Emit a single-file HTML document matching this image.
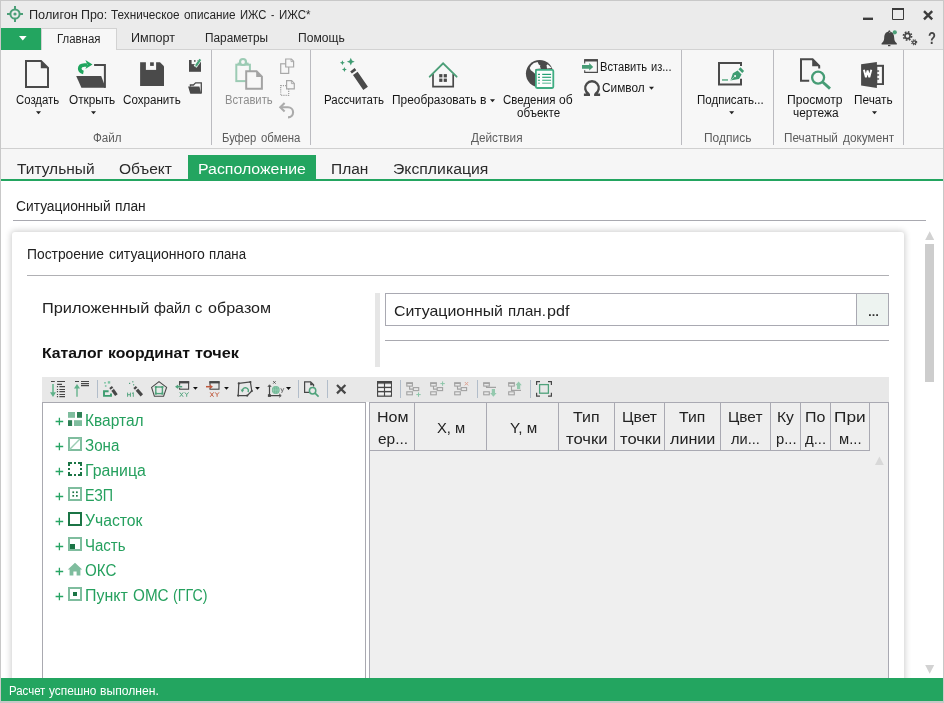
<!DOCTYPE html>
<html lang="ru">
<head>
<meta charset="utf-8">
<title>Полигон Про: Техническое описание ИЖС - ИЖС*</title>
<style>
*{box-sizing:border-box;margin:0;padding:0}
html,body{width:944px;height:703px;overflow:hidden;background:#fff}
body{font-family:"Liberation Sans",sans-serif;color:#1f1f1f;position:relative}
.a{position:absolute}
.t{position:absolute;white-space:nowrap;line-height:1;transform-origin:0 0}
#tx{position:absolute;left:0;top:0;width:944px;height:703px;will-change:transform}
svg{position:absolute;overflow:visible}
#win{left:0;top:0;width:944px;height:703px;background:#c8c8c8}
#inner{left:1px;top:1px;width:942px;height:700px;background:#fff}
#title{left:1px;top:1px;width:942px;height:49px;background:#ebebeb}
#tabline{left:117px;top:49px;width:826px;height:1px;background:#d2d2d2}
#appbtn{left:1px;top:28px;width:40px;height:22px;background:#23a560}
#tabact{left:41px;top:28px;width:76px;height:22px;background:#f7f7f7;border:1px solid #d2d2d2;border-bottom:none}
#ribbon{left:1px;top:50px;width:942px;height:98px;background:#f7f7f7}
#ribline{left:1px;top:148px;width:942px;height:1px;background:#d0d0d0}
.sep{position:absolute;top:50px;width:1px;height:95px;background:#bbbbc0}
#doctabs{left:1px;top:149px;width:942px;height:30px;background:#f6f6f6}
#dtact{left:188px;top:155px;width:128px;height:25px;background:#23a560}
#greenline{left:1px;top:179px;width:942px;height:2px;background:#23a560}
#hline1{left:13px;top:220px;width:913px;height:1px;background:#a9a9b0}
#card{left:12px;top:232px;width:892px;height:480px;background:#fff;border-radius:3px;box-shadow:0 0 6px 1px rgba(0,0,0,.2)}
#hline2{left:27px;top:275px;width:862px;height:1px;background:#b0b0b4}
#split{left:375px;top:293px;width:5px;height:74px;background:#e6e6e6}
#input{left:385px;top:293px;width:504px;height:33px;background:#fff;border:1px solid #a9a9b2}
#dots{left:856px;top:293px;width:33px;height:33px;background:#edf3f0;border:1px solid #a9a9b2}
#hline3{left:385px;top:340px;width:504px;height:1px;background:#a9a9b0}
#toolbar{left:42px;top:377px;width:847px;height:25px;background:#e8e8e8}
.tsep{position:absolute;top:380px;width:1px;height:18px;background:#b2bdca}
#tree{left:42px;top:402px;width:324px;height:300px;background:#fff;border:1px solid #a9a9b0}
#grid{left:369px;top:402px;width:520px;height:300px;background:#efefef;border:1px solid #a9a9b2}
#ghead{left:370px;top:403px;width:500px;height:48px;background:#eeeeee;border-bottom:1px solid #a9a9b2}
.gdiv{position:absolute;top:403px;width:1px;height:47px;background:#a9a9b2}
#sthumb{left:925px;top:244px;width:9px;height:138px;background:#cdcdcd}
#status{left:1px;top:678px;width:942px;height:23px;background:#23a560}
#botbord{left:0;top:701px;width:944px;height:2px;background:#c8c8c8}

</style>
</head>
<body>
<div class="a" id="win"></div>
<div class="a" id="inner"></div>
<div class="a" id="title"></div>
<div class="a" id="tabline"></div>
<div class="a" id="ribbon"></div>
<div class="a" id="appbtn"></div>
<div class="a" id="tabact"></div>
<div class="a" id="ribline"></div>
<div class="sep" style="left:211px"></div>
<div class="sep" style="left:310px"></div>
<div class="sep" style="left:681px"></div>
<div class="sep" style="left:773px"></div>
<div class="sep" style="left:903px"></div>
<div class="a" id="doctabs"></div>
<div class="a" id="dtact"></div>
<div class="a" id="greenline"></div>
<div class="a" id="hline1"></div>
<div class="a" id="card"></div>
<div class="a" id="hline2"></div>
<div class="a" id="split"></div>
<div class="a" id="input"></div>
<div class="a" id="dots"></div>
<div class="a" id="hline3"></div>
<div class="a" id="toolbar"></div>
<div class="tsep" style="left:97px"></div>
<div class="tsep" style="left:298px"></div>
<div class="tsep" style="left:327px"></div>
<div class="tsep" style="left:400px"></div>
<div class="tsep" style="left:477px"></div>
<div class="tsep" style="left:530px"></div>
<div class="a" id="tree"></div>
<div class="a" id="grid"></div>
<div class="a" id="ghead"></div>
<div class="gdiv" style="left:414px"></div>
<div class="gdiv" style="left:486px"></div>
<div class="gdiv" style="left:558px"></div>
<div class="gdiv" style="left:614px"></div>
<div class="gdiv" style="left:664px"></div>
<div class="gdiv" style="left:720px"></div>
<div class="gdiv" style="left:770px"></div>
<div class="gdiv" style="left:800px"></div>
<div class="gdiv" style="left:830px"></div>
<div class="gdiv" style="left:869px"></div>
<div class="a" id="sthumb"></div>
<div class="a" id="status"></div>
<div class="a" id="botbord"></div>

<svg width="944" height="703" viewBox="0 0 944 703" style="left:0;top:0">
<g stroke="#4c9f78" stroke-width="2" fill="none"><circle cx="15" cy="14" r="4.6"/><path d="M15,6 V9.5 M15,18.5 V22 M7,14 H10.5 M19.5,14 H23"/></g><circle cx="15" cy="14" r="1.6" fill="#4c9f78"/>
<path d="M19,36 H26.6 L22.8,40.6 Z" fill="#fff"/>
<rect x="863" y="17.6" width="10" height="2.4" fill="#3c3c3c"/>
<path d="M892.5,9.5 H903.5 V19.5 H892.5 Z" fill="none" stroke="#3c3c3c" stroke-width="1"/><rect x="892" y="8" width="12" height="2" fill="#3c3c3c"/>
<path d="M924,11.2 L932.2,19.4 M932.2,11.2 L924,19.4" stroke="#3c3c3c" stroke-width="2.4" fill="none"/>
<path d="M889.2,30.6 a1.2,1.2 0 0 1 0,2.4 M889.2,31.6 C885.2,31.6 884.2,35.5 884.2,38 C884.2,41 882.6,42.3 881.6,43.2 V44.4 H896.8 V43.2 C895.8,42.3 894.2,41 894.2,38 C894.2,35.5 893.2,31.6 889.2,31.6 Z" fill="#444"/><circle cx="889.2" cy="31.4" r="1" fill="#444"/><rect x="888" y="45" width="2.4" height="1.2" fill="#444"/>
<circle cx="894.8" cy="32.3" r="2.1" fill="#4c9f78"/>
<g fill="none" stroke="#444"><circle cx="907.5" cy="36" r="2.6" stroke-width="1.6"/><circle cx="907.5" cy="36" r="4.1" stroke-width="1.6" stroke-dasharray="1.7 1.5"/><circle cx="914.2" cy="42.3" r="1.5" stroke-width="1.3"/><circle cx="914.2" cy="42.3" r="2.5" stroke-width="1.1" stroke-dasharray="1.1 0.9"/></g>
<path d="M26,61 H41 L48,68 V87 H26 Z" fill="none" stroke="#4a4a4a" stroke-width="2"/><path d="M40.8,61 V68.2 H48 Z" fill="#4a4a4a"/>
<path d="M36.0,111.2 H41.0 L38.5,114.2 Z" fill="#222"/>
<path d="M91.0,111.2 H96.0 L93.5,114.2 Z" fill="#222"/>
<path d="M94.1,65 H104.9 V87.8" fill="none" stroke="#4a4a4a" stroke-width="2"/><path d="M76.2,76.1 H101.2 L105.6,87.8 H81.4 Z" fill="#4a4a4a"/>
<path d="M83.4,72.4 C78.4,71.4 78.2,65.2 84.4,65 H87" fill="none" stroke="#1fa55e" stroke-width="3.6"/><path d="M85.4,59.9 L92.5,64.4 L85.4,68.9 L87.4,64.4 Z" fill="#1fa55e"/>
<path d="M140.1,62.2 H160 L164,66.3 V85.9 H140.1 Z" fill="#4a4a4a"/><rect x="145.9" y="61.5" width="10.2" height="8.4" fill="#f7f7f7"/><rect x="150.1" y="62.3" width="3.7" height="3.6" fill="#4a4a4a"/>
<path d="M189,60 H201 V71.8 H189 Z" fill="#4a4a4a"/><rect x="191.6" y="59.5" width="5.4" height="4.6" fill="#f7f7f7"/><rect x="194" y="60.2" width="1.6" height="1.5" fill="#4a4a4a"/>
<path d="M200.6,59 L195.2,66.8" stroke="#f7f7f7" stroke-width="3.6" fill="none"/><path d="M200.3,59.4 L195.9,65.8" stroke="#47a278" stroke-width="2.2" fill="none"/><path d="M195.9,65.8 L195.2,66.9" stroke="#9fd0b8" stroke-width="1.6"/>
<path d="M190.4,86.4 V85 H193.4 L195.6,82.9 H201.3 V93.4" fill="none" stroke="#4a4a4a" stroke-width="1.3"/><path d="M188.1,86.4 H199.4 L201.3,93.8 H190.3 Z" fill="#4a4a4a"/>
<rect x="236.3" y="64.7" width="13.6" height="16.4" fill="none" stroke="#9ccbb4" stroke-width="2"/><rect x="237.6" y="62.6" width="11" height="2.4" fill="#9ccbb4"/><circle cx="243" cy="62" r="3" fill="#f7f7f7" stroke="#9ccbb4" stroke-width="2.2"/>
<path d="M246.2,71.3 H256.6 L261.9,76.6 V88.8 H246.2 Z" fill="#f7f7f7" stroke="#a3a3a3" stroke-width="2"/><path d="M256.2,71 V77 H262.2 Z" fill="#a3a3a3"/>
<rect x="280.7" y="63.8" width="8" height="9.6" fill="#f7f7f7" stroke="#a8a8a8" stroke-width="1.2"/><path d="M285.7,59 H291.4 L293.6,61.2 V67 H285.7 Z" fill="#f7f7f7" stroke="#a8a8a8" stroke-width="1.2"/><path d="M291,59 V61.6 H293.6" fill="none" stroke="#a8a8a8" stroke-width="0.9"/>
<rect x="280.7" y="85.6" width="8" height="9.8" fill="none" stroke="#9a9a9a" stroke-width="1.2" stroke-dasharray="1.1 1.1"/><path d="M286.6,80.7 H291.6 L294.3,83.4 V88.8 H286.6 Z" fill="#f7f7f7" stroke="#a8a8a8" stroke-width="1.2"/><path d="M291.4,80.7 V83.6 H294.3" fill="none" stroke="#a8a8a8" stroke-width="0.9"/>
<path d="M281.5,107.2 H288 a5.1,5.1 0 0 1 0,10.2" fill="none" stroke="#ababab" stroke-width="2.1"/><path d="M284.6,103 L280.3,107.2 L284.6,111.4" fill="none" stroke="#ababab" stroke-width="2.1"/>
<path d="M350.8,57.800000000000004 L351.97,60.53 L354.7,61.7 L351.97,62.870000000000005 L350.8,65.60000000000001 L349.63,62.870000000000005 L346.90000000000003,61.7 L349.63,60.53 Z" fill="#3f9c72"/>
<path d="M342.4,60.2 L343.15,61.95 L344.9,62.7 L343.15,63.45 L342.4,65.2 L341.65,63.45 L339.9,62.7 L341.65,61.95 Z" fill="#3f9c72"/>
<path d="M344.4,67.0 L345.15,68.75 L346.9,69.5 L345.15,70.25 L344.4,72.0 L343.65,70.25 L341.9,69.5 L343.65,68.75 Z" fill="#3f9c72"/>
<path d="M352.4,69.7 L354.1,71.9 M355.3,73.4 L365.6,88.3" stroke="#4a4a4a" stroke-width="5.6" fill="none"/>
<path d="M433,74 V86.7 H453.2 V74" fill="none" stroke="#4a4a4a" stroke-width="1.7"/><path d="M429.7,76.7 L443.1,63.3 L456.6,76.7" fill="none" stroke="#4c9f78" stroke-width="1.9" stroke-linecap="round"/>
<rect x="439.2" y="74.1" width="3.2" height="3.3" fill="#4a4a4a"/>
<rect x="443.7" y="74.1" width="3.2" height="3.3" fill="#4a4a4a"/>
<rect x="439.2" y="78.6" width="3.2" height="3.3" fill="#4a4a4a"/>
<rect x="443.7" y="78.6" width="3.2" height="3.3" fill="#4a4a4a"/>
<path d="M490.0,99.2 H495.0 L492.5,102.2 Z" fill="#222"/>
<circle cx="539.6" cy="73.6" r="13.7" fill="#4a4a4a"/>
<path d="M537.6,62 L538.8,64.5 L540.5,65.7 L539.9,66.8 L541,68.6 L535.6,69.1 L535.1,73.8 L532.5,71.6 L530.8,70.2 L529.7,67.9 L531.1,65.4 L533.9,63.1 Z" fill="#fafafa"/><path d="M546.6,65.6 L547.6,64.2 L551.8,68 L547,68.6 Z" fill="#fafafa"/>
<rect x="535.9" y="69.8" width="17.4" height="18.2" rx="1.2" fill="#fdfdfd" stroke="#3fad82" stroke-width="1.8"/>
<rect x="537.9" y="73.80000000000001" width="2.1" height="1.2" fill="#249f72"/><rect x="542.2" y="73.80000000000001" width="8.9" height="1.2" fill="#249f72"/>
<rect x="537.9" y="76.7" width="2.1" height="1.2" fill="#2fa679"/><rect x="542.2" y="76.7" width="8.9" height="1.2" fill="#2fa679"/>
<rect x="537.9" y="79.7" width="2.1" height="1.2" fill="#4db38b"/><rect x="542.2" y="79.7" width="8.9" height="1.2" fill="#4db38b"/>
<rect x="537.9" y="82.60000000000001" width="2.1" height="1.2" fill="#72c3a3"/><rect x="542.2" y="82.60000000000001" width="8.9" height="1.2" fill="#72c3a3"/>
<path d="M584.7,63.4 V60 H597.4 V72.4 H584.7 V70.2" fill="none" stroke="#4a4a4a" stroke-width="1.1"/><rect x="584.2" y="59.1" width="13.7" height="2.4" fill="#4a4a4a"/>
<path d="M582,65.1 H589.2 V63.1 L593.2,66.9 L589.2,70.4 V68.7 H582 Z" fill="#469c75"/>
<path d="M649.0,86.8 H654.0 L651.5,89.8 Z" fill="#222"/>
<path d="M583.9,94.75 H590 M594.1,94.75 H600.1 M588.7,94 A6.8,6.8 0 1 1 595.3,94" fill="none" stroke="#4a4a4a" stroke-width="2.3"/>
<path d="M741,66 V63 H719 V84.6 H741 V78.8" fill="none" stroke="#4a4a4a" stroke-width="2"/><rect x="722" y="79.1" width="6" height="1.7" fill="#6fb593"/>
<path d="M730.4,80.6 L732.9,73.2 L737.6,70.5 L741.6,74.5 L739,78.9 Z M738.5,69.3 L740.5,67.3 L744.1,71 L742.2,72.9 Z" fill="#3f9c72"/><circle cx="735.1" cy="76.1" r="1.05" fill="#f7f7f7"/><path d="M731,80 L734.4,76.8" stroke="#f7f7f7" stroke-width="0.5"/>
<path d="M729.2,111.2 H734.2 L731.7,114.2 Z" fill="#222"/>
<path d="M809.2,80.8 H801 V59.2 H812.6 L819.2,65.8 V68.6" fill="none" stroke="#4a4a4a" stroke-width="2"/><path d="M812.2,59 V66.2 H819.6 Z" fill="#4a4a4a"/>
<circle cx="818.1" cy="77.6" r="6" fill="#f7f7f7" stroke="#469c75" stroke-width="2.3"/><path d="M822.6,82 L830,88.6" stroke="#469c75" stroke-width="2.9" fill="none"/>
<rect x="876" y="64.8" width="8" height="20.2" fill="#4a4a4a"/><rect x="877.3" y="66.8" width="4.6" height="16.4" fill="#fbfbfb"/>
<rect x="876.5" y="70.4" width="2.6" height="1.3" fill="#4a4a4a"/>
<rect x="876.5" y="74.3" width="2.6" height="1.3" fill="#4a4a4a"/>
<rect x="876.5" y="78.3" width="2.6" height="1.3" fill="#4a4a4a"/>
<path d="M861.1,64.2 L876.9,62.1 V87.9 L861.1,85.6 Z" fill="#4a4a4a"/>
<path d="M863.9,69.8 L865.9,77.2 L867.6,70.6 L869.3,77.2 L871.3,69.8" fill="none" stroke="#fff" stroke-width="1.9" stroke-linejoin="miter" stroke-miterlimit="2"/>
<path d="M872.0,111.2 H877.0 L874.5,114.2 Z" fill="#222"/>
<rect x="869" y="314.2" width="1.8" height="1.8" fill="#333"/>
<rect x="872.6" y="314.2" width="1.8" height="1.8" fill="#333"/>
<rect x="876.2" y="314.2" width="1.8" height="1.8" fill="#333"/>
<path d="M925.2,240 L929.7,231.2 L934.2,240 Z" fill="#d2d2d2"/>
<path d="M925.2,665 L934.2,665 L929.7,673.8 Z" fill="#d2d2d2"/>
<path d="M875,465 L879.4,456.4 L883.8,465 Z" fill="#d8d8d8"/>
<path d="M53,384 V394" stroke="#7cbf9f" stroke-width="1.9" fill="none"/><path d="M50,392.2 H56 L53,396.9 Z" fill="#5fb089"/>
<path d="M51,381.5 H54.8 M57.1,381.5 H65 M57.1,384.4 H62" stroke="#474747" stroke-width="1.2"/>
<path d="M56.9,386.6 H58.1 M59.4,386.6 H65" stroke="#474747" stroke-width="1.2"/>
<path d="M56.9,389.5 H58.1 M59.4,389.5 H65" stroke="#474747" stroke-width="1.2"/>
<path d="M56.9,391.6 H58.1 M59.4,391.6 H65" stroke="#474747" stroke-width="1.2"/>
<path d="M56.9,394.5 H58.1 M59.4,394.5 H65" stroke="#474747" stroke-width="1.2"/>
<path d="M56.9,396.6 H58.1 M59.4,396.6 H65" stroke="#474747" stroke-width="1.2"/>
<path d="M77,386 V396.8" stroke="#6fb793" stroke-width="1.5" fill="none"/><path d="M74,388.6 L77,384 L80,388.6 Z" fill="#5fb089"/>
<path d="M75,381.5 H79 M81,381.5 H89 M81,383.6 H89 M81,385.7 H89" stroke="#474747" stroke-width="1.2"/>
<path d="M108.6,391.3 H104 V395.9 H111 V393.6" fill="none" stroke="#3d9c6f" stroke-width="1.9"/>
<path d="M110.6,387 L116.4,395.2" stroke="#474747" stroke-width="3.2"/><path d="M111.8,388.8 L112.6,389.9" stroke="#e8e8e8" stroke-width="3.6"/>
<rect x="104.2" y="382.0" width="1.6" height="1.6" fill="#7cc3a2"/>
<rect x="107.8" y="381.2" width="2.4" height="2.4" fill="#7cc3a2"/>
<rect x="104.9" y="385.2" width="1.6" height="1.6" fill="#7cc3a2"/>
<path d="M127.6,392.6 V396.8 M130.4,392.6 V396.8 M127.6,394.7 H130.4 M132,393.6 L133.3,392.6 V396.8" stroke="#4fa27b" stroke-width="0.95" fill="none"/>
<path d="M134.6,387 L141.8,395.4" stroke="#474747" stroke-width="3.2"/><path d="M136,388.7 L136.9,389.7" stroke="#e8e8e8" stroke-width="3.6"/>
<rect x="129.0" y="382.79999999999995" width="1.2" height="1.2" fill="#4fa27b"/>
<rect x="132.20000000000002" y="381.2" width="1.2" height="1.2" fill="#4fa27b"/>
<rect x="133.0" y="384.2" width="1.2" height="1.2" fill="#4fa27b"/>
<path d="M159,381.6 L166.6,387.4 L163.6,396.3 H154.4 L151.6,387.4 Z" fill="none" stroke="#474747" stroke-width="1.1"/>
<rect x="155.8" y="387" width="6.6" height="6.6" fill="none" stroke="#4fa27b" stroke-width="1.4"/>
<rect x="154.8" y="386" width="2" height="2" fill="#4fa27b"/>
<rect x="161.4" y="386" width="2" height="2" fill="#4fa27b"/>
<rect x="154.8" y="392.6" width="2" height="2" fill="#4fa27b"/>
<rect x="161.4" y="392.6" width="2" height="2" fill="#4fa27b"/>
<rect x="179.6" y="381.8" width="9" height="7.4" fill="none" stroke="#474747" stroke-width="1.1"/><rect x="179" y="381.2" width="10.2" height="2.2" fill="#474747"/>
<rect x="177.2" y="385.6" width="5.2" height="2.2" fill="#e8e8e8"/><path d="M182.2,386.7 H177.6" stroke="#4fa27b" stroke-width="1.5"/><path d="M178.2,384.5 L175,386.7 L178.2,388.9 Z" fill="#4fa27b"/>
<path d="M179.8,392.4 L183.20000000000002,396.8 M183.20000000000002,392.4 L179.8,396.8 M184.8,392.4 L186.70000000000002,394.6 L188.60000000000002,392.4 M186.70000000000002,394.6 V396.8" stroke="#4fa27b" stroke-width="0.95" fill="none"/>
<path d="M193.0,387 H197.8 L195.4,389.8 Z" fill="#111"/>
<rect x="210.0" y="381.8" width="9" height="7.4" fill="none" stroke="#474747" stroke-width="1.1"/><rect x="209.4" y="381.2" width="10.2" height="2.2" fill="#474747"/>
<rect x="205.8" y="385.6" width="6" height="2.2" fill="#e8e8e8"/><path d="M206.0,386.7 H210.4" stroke="#c0583c" stroke-width="1.5"/><path d="M209.8,384.5 L213.0,386.7 L209.8,388.9 Z" fill="#c0583c"/>
<path d="M210.20000000000002,392.4 L213.60000000000002,396.8 M213.60000000000002,392.4 L210.20000000000002,396.8 M215.20000000000002,392.4 L217.10000000000002,394.6 L219.00000000000003,392.4 M217.10000000000002,394.6 V396.8" stroke="#c0583c" stroke-width="0.95" fill="none"/>
<path d="M224.1,387 H228.9 L226.5,389.8 Z" fill="#111"/>
<path d="M238.8,383.4 L250.4,382 L251.8,391 L247.2,395.6 L238.2,395.6 Z" fill="none" stroke="#474747" stroke-width="1.2"/>
<circle cx="238.8" cy="383.4" r="1.1" fill="#474747"/>
<circle cx="250.4" cy="382" r="1.1" fill="#474747"/>
<circle cx="251.8" cy="391" r="1.1" fill="#474747"/>
<circle cx="247.2" cy="395.6" r="1.1" fill="#474747"/>
<circle cx="238.2" cy="395.6" r="1.1" fill="#474747"/>
<path d="M242.4,390.6 a3,3 0 1 1 5.6,1.6" fill="none" stroke="#4fa27b" stroke-width="1.4"/><path d="M240.6,389.4 L244.2,389.8 L242.2,392.6 Z" fill="#4fa27b"/>
<path d="M255.1,387 H259.9 L257.5,389.8 Z" fill="#111"/>
<path d="M269.5,385.6 V395.6 H280.4" fill="none" stroke="#474747" stroke-width="1.2"/><rect x="267.9" y="394.2" width="3" height="2.7" fill="#474747"/><path d="M267.9,387 L269.5,384.8 L271.1,387 M279.2,394 L281.2,395.6 L279.2,397.2" fill="none" stroke="#474747" stroke-width="1"/>
<circle cx="275.8" cy="390" r="3.9" fill="#6cb794"/><path d="M272,390 H279.6 M275.8,386.2 V393.8 M274,386.8 Q272.8,390 274,393.2 M277.6,386.8 Q278.8,390 277.6,393.2" stroke="#a5d3bd" stroke-width="0.6" fill="none"/>
<path d="M273.2,381.2 L275.6,383.6 M275.6,381.2 L273.2,383.6" stroke="#444" stroke-width="0.9"/><path d="M280.8,388.2 L282.3,391.4 M283.8,388.2 L281.6,393" stroke="#6a6a6a" stroke-width="0.9" fill="none"/>
<path d="M286.0,387.1 H291.0 L288.5,390.0 Z" fill="#111"/>
<path d="M309,392.4 H304.6 V381.8 H310.6 L313.6,384.8 V386.4" fill="none" stroke="#474747" stroke-width="1.2"/><path d="M310.2,381.8 V385.2 H313.6 Z" fill="#474747"/>
<circle cx="312.6" cy="390.8" r="3.2" fill="none" stroke="#4fa27b" stroke-width="1.5"/><path d="M315,393.2 L318.6,396.6" stroke="#4fa27b" stroke-width="1.7"/>
<path d="M337,385 L345.4,393.4 M345.4,385 L337,393.4" stroke="#474747" stroke-width="2.2" fill="none"/>
<rect x="377.6" y="381.6" width="13.8" height="14.6" fill="#dcdcdc" stroke="#474747" stroke-width="1.2"/><rect x="377" y="381" width="15" height="2.6" fill="#474747"/>
<path d="M384.5,383 V396 M378,387.4 H391 M378,391.6 H391" stroke="#474747" stroke-width="1.1"/><path d="M378.4,385.4 H391 M378.4,389.5 H391 M378.4,393.8 H391" stroke="#f4f4f4" stroke-width="1.6"/><path d="M384.5,383 V396" stroke="#474747" stroke-width="1.1"/>
<g fill="none" stroke="#a2a2a2" stroke-width="1.1"><rect x="406.8" y="382.9" width="5.6" height="3.2"/><rect x="413.3" y="387.6" width="5.4" height="3"/><rect x="406.8" y="391.8" width="5.6" height="3"/><path d="M409.6,386.1 V389.1 H413.3"/></g><rect x="406.3" y="382.4" width="6.6" height="1.6" fill="#a2a2a2"/>
<path d="M416.3,394.6 H420.7 M418.5,392.40000000000003 V396.8" stroke="#8cc5a8" stroke-width="1"/>
<g fill="none" stroke="#a2a2a2" stroke-width="1.1"><rect x="430.7" y="382.9" width="5.6" height="3.2"/><rect x="437.2" y="387.6" width="5.4" height="3"/><rect x="430.7" y="391.8" width="5.6" height="3"/><path d="M433.5,386.1 V389.1 H437.2"/></g><rect x="430.2" y="382.4" width="6.6" height="1.6" fill="#a2a2a2"/>
<path d="M440.40000000000003,383.6 H444.8 M442.6,381.40000000000003 V385.8" stroke="#8cc5a8" stroke-width="1"/>
<g fill="none" stroke="#a2a2a2" stroke-width="1.1"><rect x="454.7" y="382.9" width="5.6" height="3.2"/><rect x="461.2" y="387.6" width="5.4" height="3"/><rect x="454.7" y="391.8" width="5.6" height="3"/><path d="M457.5,386.1 V389.1 H461.2"/></g><rect x="454.2" y="382.4" width="6.6" height="1.6" fill="#a2a2a2"/>
<path d="M464.8,382 L468.2,385.4 M468.2,382 L464.8,385.4" stroke="#dfa493" stroke-width="1"/>
<g fill="none" stroke="#a2a2a2" stroke-width="1.1"><rect x="483.7" y="382.9" width="5.6" height="3.2"/><rect x="483.7" y="391.8" width="5.6" height="3"/></g><rect x="483.2" y="382.4" width="6.6" height="1.6" fill="#a2a2a2"/>
<path d="M486.5,386.1 V387.4 H496" fill="none" stroke="#a2a2a2" stroke-width="1.1"/><path d="M491.8,389 H495 V393 H496.6 L493.4,396.8 L490.2,393 H491.8 Z" fill="#94c9ae"/>
<g fill="none" stroke="#a2a2a2" stroke-width="1.1"><rect x="508.7" y="382.9" width="5.6" height="3.2"/><rect x="508.7" y="391.8" width="5.6" height="3"/></g><rect x="508.2" y="382.4" width="6.6" height="1.6" fill="#a2a2a2"/>
<path d="M511.5,386.1 V390.4 H521" fill="none" stroke="#a2a2a2" stroke-width="1.1"/><path d="M517,389 H520.2 V385.2 H521.8 L518.6,381.4 L515.4,385.2 H517 Z" fill="#94c9ae"/>
<path d="M536.6,385 V381.6 H540 M548,381.6 H551.4 V385 M551.4,392.8 V396.2 H548 M540,396.2 H536.6 V392.8" fill="none" stroke="#474747" stroke-width="1.2"/><rect x="539.6" y="384.6" width="8.8" height="8.6" fill="none" stroke="#4fa27b" stroke-width="1.3"/>
<path d="M55.6,421.5 H63.2 M59.4,417.7 V425.3" stroke="#27a463" stroke-width="1.3"/>
<path d="M55.6,446.5 H63.2 M59.4,442.7 V450.3" stroke="#27a463" stroke-width="1.3"/>
<path d="M55.6,471.5 H63.2 M59.4,467.7 V475.3" stroke="#27a463" stroke-width="1.3"/>
<path d="M55.6,496.5 H63.2 M59.4,492.7 V500.3" stroke="#27a463" stroke-width="1.3"/>
<path d="M55.6,521.5 H63.2 M59.4,517.7 V525.3" stroke="#27a463" stroke-width="1.3"/>
<path d="M55.6,546.5 H63.2 M59.4,542.7 V550.3" stroke="#27a463" stroke-width="1.3"/>
<path d="M55.6,571.5 H63.2 M59.4,567.7 V575.3" stroke="#27a463" stroke-width="1.3"/>
<path d="M55.6,596.5 H63.2 M59.4,592.7 V600.3" stroke="#27a463" stroke-width="1.3"/>
<rect x="68" y="412" width="7" height="5.8" fill="#7fbd9e"/><rect x="77" y="412" width="5" height="5.8" fill="#2f8056"/><rect x="68" y="420.2" width="4.1" height="5.8" fill="#2f8056"/><rect x="74" y="420.2" width="8" height="5.8" fill="#7fbd9e"/>
<rect x="69" y="438" width="12" height="12" fill="none" stroke="#7fbd9e" stroke-width="2"/><path d="M69.6,449.4 L80.4,438.6" stroke="#9ccdb4" stroke-width="1.4"/>
<path d="M68,462 h4 v2 h-2 v2 h-2 Z" fill="#1b7445"/>
<path d="M82,462 h-4 v2 h2 v2 h2 Z" fill="#1b7445"/>
<path d="M68,476 h4 v-2 h-2 v-2 h-2 Z" fill="#1b7445"/>
<path d="M82,476 h-4 v-2 h2 v-2 h2 Z" fill="#1b7445"/>
<rect x="74" y="462" width="2" height="2" fill="#1b7445"/>
<rect x="74" y="474" width="2" height="2" fill="#1b7445"/>
<rect x="68" y="468" width="2" height="2" fill="#1b7445"/>
<rect x="80" y="468" width="2" height="2" fill="#1b7445"/>
<rect x="69" y="488" width="12" height="12" fill="none" stroke="#7fbd9e" stroke-width="2"/>
<rect x="72.4" y="491.4" width="1.7" height="1.7" fill="#1b7445"/>
<rect x="76" y="491.4" width="1.7" height="1.7" fill="#1b7445"/>
<rect x="72.4" y="495" width="1.7" height="1.7" fill="#1b7445"/>
<rect x="76" y="495" width="1.7" height="1.7" fill="#1b7445"/>
<rect x="69" y="513" width="12" height="12" fill="none" stroke="#1b7445" stroke-width="2"/>
<rect x="69" y="538" width="12" height="12" fill="none" stroke="#7fbd9e" stroke-width="2"/><rect x="70" y="544" width="5" height="5" fill="#1b7445"/>
<path d="M67.8,569.6 L75,562.8 L82.2,569.6 H80.4 V575.4 H76.6 V571.4 H73.4 V575.4 H69.6 V569.6 Z" fill="#7fbd9e"/>
<rect x="69" y="588" width="12" height="12" fill="none" stroke="#7fbd9e" stroke-width="2"/><rect x="73" y="592" width="4" height="4" fill="#1b7445"/>
</svg>
<div id="tx">
<span class="t" style="left:29.00px;top:9.00px;font-size:12px;color:#262626;transform:scaleX(1.0579)">Полигон</span>
<span class="t" style="left:81.00px;top:9.00px;font-size:12px;color:#262626;transform:scaleX(1.0351)">Про:</span>
<span class="t" style="left:111.00px;top:9.00px;font-size:12px;color:#262626;transform:scaleX(0.9784)">Техническое</span>
<span class="t" style="left:184.00px;top:9.00px;font-size:12px;color:#262626;transform:scaleX(0.9808)">описание</span>
<span class="t" style="left:240.00px;top:9.00px;font-size:12px;color:#262626;transform:scaleX(0.9369)">ИЖС</span>
<span class="t" style="left:271.00px;top:9.00px;font-size:12px;color:#262626;transform:scaleX(0.8286)">-</span>
<span class="t" style="left:279.00px;top:9.00px;font-size:12px;color:#262626;transform:scaleX(0.9588)">ИЖС*</span>
<span class="t" style="left:57.00px;top:33.00px;font-size:12px;color:#262626;transform:scaleX(0.9515)">Главная</span>
<span class="t" style="left:131.00px;top:32.00px;font-size:12px;color:#262626;transform:scaleX(1.0467)">Импорт</span>
<span class="t" style="left:205.00px;top:32.00px;font-size:12px;color:#262626;transform:scaleX(0.9853)">Параметры</span>
<span class="t" style="left:298.00px;top:32.00px;font-size:12px;color:#262626;transform:scaleX(1.0071)">Помощь</span>
<span class="t" style="left:16.00px;top:94.00px;font-size:12px;color:#161616;transform:scaleX(0.9463)">Создать</span>
<span class="t" style="left:69.00px;top:94.00px;font-size:12px;color:#161616;transform:scaleX(0.9802)">Открыть</span>
<span class="t" style="left:123.00px;top:94.00px;font-size:12px;color:#161616;transform:scaleX(0.9674)">Сохранить</span>
<span class="t" style="left:225.00px;top:94.00px;font-size:12px;color:#8e8e8e;transform:scaleX(0.9370)">Вставить</span>
<span class="t" style="left:324.00px;top:94.00px;font-size:12px;color:#161616;transform:scaleX(0.9569)">Рассчитать</span>
<span class="t" style="left:392.00px;top:94.00px;font-size:12px;color:#161616;transform:scaleX(0.9920)">Преобразовать</span>
<span class="t" style="left:480.00px;top:94.00px;font-size:12px;color:#161616;transform:scaleX(1.0128)">в</span>
<span class="t" style="left:503.00px;top:94.00px;font-size:12px;color:#161616;transform:scaleX(0.9574)">Сведения</span>
<span class="t" style="left:559.00px;top:94.00px;font-size:12px;color:#161616;transform:scaleX(1.0057)">об</span>
<span class="t" style="left:517.00px;top:107.00px;font-size:12px;color:#161616;transform:scaleX(0.9650)">объекте</span>
<span class="t" style="left:600.00px;top:61.00px;font-size:12px;color:#161616;transform:scaleX(0.9270)">Вставить</span>
<span class="t" style="left:651.00px;top:61.00px;font-size:12px;color:#161616;transform:scaleX(0.9207)">из...</span>
<span class="t" style="left:602.00px;top:82.00px;font-size:12px;color:#161616;transform:scaleX(0.9871)">Символ</span>
<span class="t" style="left:697.00px;top:94.00px;font-size:12px;color:#161616;transform:scaleX(0.9609)">Подписать...</span>
<span class="t" style="left:787.00px;top:94.00px;font-size:12px;color:#161616;transform:scaleX(1.0129)">Просмотр</span>
<span class="t" style="left:793.00px;top:107.00px;font-size:12px;color:#161616;transform:scaleX(0.9907)">чертежа</span>
<span class="t" style="left:854.00px;top:94.00px;font-size:12px;color:#161616;transform:scaleX(0.9826)">Печать</span>
<span class="t" style="left:93.00px;top:132.00px;font-size:12px;color:#5c5c5c;transform:scaleX(0.9677)">Файл</span>
<span class="t" style="left:222.00px;top:132.00px;font-size:12px;color:#5c5c5c;transform:scaleX(0.9366)">Буфер</span>
<span class="t" style="left:261.00px;top:132.00px;font-size:12px;color:#5c5c5c;transform:scaleX(0.9506)">обмена</span>
<span class="t" style="left:471.00px;top:132.00px;font-size:12px;color:#5c5c5c;transform:scaleX(0.9797)">Действия</span>
<span class="t" style="left:704.00px;top:132.00px;font-size:12px;color:#5c5c5c;transform:scaleX(0.9989)">Подпись</span>
<span class="t" style="left:784.00px;top:132.00px;font-size:12px;color:#5c5c5c;transform:scaleX(0.9806)">Печатный</span>
<span class="t" style="left:843.00px;top:132.00px;font-size:12px;color:#5c5c5c;transform:scaleX(0.9845)">документ</span>
<span class="t" style="left:17.00px;top:161.00px;font-size:15.5px;color:#2b2b2b;transform:scaleX(0.9993)">Титульный</span>
<span class="t" style="left:119.00px;top:161.00px;font-size:15.5px;color:#2b2b2b;transform:scaleX(1.0038)">Объект</span>
<span class="t" style="left:198.00px;top:161.00px;font-size:15.5px;color:#ffffff;transform:scaleX(1.0243)">Расположение</span>
<span class="t" style="left:331.00px;top:161.00px;font-size:15.5px;color:#2b2b2b;transform:scaleX(0.9986)">План</span>
<span class="t" style="left:393.00px;top:161.00px;font-size:15.5px;color:#2b2b2b;transform:scaleX(1.0184)">Экспликация</span>
<span class="t" style="left:16.00px;top:199.00px;font-size:14px;color:#222;transform:scaleX(0.9850)">Ситуационный</span>
<span class="t" style="left:115.00px;top:199.00px;font-size:14px;color:#222;transform:scaleX(0.9818)">план</span>
<span class="t" style="left:27.00px;top:247.00px;font-size:14px;color:#222;transform:scaleX(0.9880)">Построение</span>
<span class="t" style="left:109.00px;top:247.00px;font-size:14px;color:#222;transform:scaleX(1.0034)">ситуационного</span>
<span class="t" style="left:209.00px;top:247.00px;font-size:14px;color:#222;transform:scaleX(0.9482)">плана</span>
<span class="t" style="left:42.00px;top:300.00px;font-size:15px;color:#222;transform:scaleX(1.0878)">Приложенный</span>
<span class="t" style="left:154.00px;top:300.00px;font-size:15px;color:#222;transform:scaleX(0.9646)">файл</span>
<span class="t" style="left:195.00px;top:300.00px;font-size:15px;color:#222;transform:scaleX(0.9754)">с</span>
<span class="t" style="left:208.00px;top:300.00px;font-size:15px;color:#222;transform:scaleX(1.0727)">образом</span>
<span class="t" style="left:42.00px;top:345.00px;font-size:15px;color:#111;transform:scaleX(1.0511);font-weight:700">Каталог</span>
<span class="t" style="left:108.00px;top:345.00px;font-size:15px;color:#111;transform:scaleX(1.0510);font-weight:700">координат</span>
<span class="t" style="left:195.00px;top:345.00px;font-size:15px;color:#111;transform:scaleX(1.0864);font-weight:700">точек</span>
<span class="t" style="left:394.00px;top:303.00px;font-size:15px;color:#222;transform:scaleX(1.0583)">Ситуационный</span>
<span class="t" style="left:508.00px;top:303.00px;font-size:15px;color:#222;transform:scaleX(1.0055)">план.</span>
<span class="t" style="left:547.00px;top:303.00px;font-size:15px;color:#222;transform:scaleX(1.0754)">pdf</span>
<span class="t" style="left:85.00px;top:413.00px;font-size:16px;color:#25a05e;transform:scaleX(0.9684)">Квартал</span>
<span class="t" style="left:85.00px;top:438.00px;font-size:16px;color:#25a05e;transform:scaleX(0.9485)">Зона</span>
<span class="t" style="left:85.00px;top:463.00px;font-size:16px;color:#25a05e;transform:scaleX(0.9898)">Граница</span>
<span class="t" style="left:85.00px;top:488.00px;font-size:16px;color:#25a05e;transform:scaleX(0.8926)">ЕЗП</span>
<span class="t" style="left:85.00px;top:513.00px;font-size:16px;color:#25a05e;transform:scaleX(0.9829)">Участок</span>
<span class="t" style="left:85.00px;top:538.00px;font-size:16px;color:#25a05e;transform:scaleX(0.9384)">Часть</span>
<span class="t" style="left:85.00px;top:563.00px;font-size:16px;color:#25a05e;transform:scaleX(0.9462)">ОКС</span>
<span class="t" style="left:85.00px;top:588.00px;font-size:16px;color:#25a05e;transform:scaleX(0.9971)">Пункт</span>
<span class="t" style="left:133.00px;top:588.00px;font-size:16px;color:#25a05e;transform:scaleX(0.9543)">ОМС</span>
<span class="t" style="left:173.00px;top:588.00px;font-size:16px;color:#25a05e;transform:scaleX(0.8871)">(ГГС)</span>
<span class="t" style="left:377.00px;top:409.00px;font-size:15px;color:#222;transform:scaleX(1.0684)">Ном</span>
<span class="t" style="left:378.00px;top:431.00px;font-size:15px;color:#222;transform:scaleX(1.0296)">ер...</span>
<span class="t" style="left:437.00px;top:420.00px;font-size:15px;color:#222;transform:scaleX(0.9846)">X, м</span>
<span class="t" style="left:510.00px;top:420.00px;font-size:15px;color:#222;transform:scaleX(1.0175)">Y, м</span>
<span class="t" style="left:573.00px;top:409.00px;font-size:15px;color:#222;transform:scaleX(1.0604)">Тип</span>
<span class="t" style="left:566.00px;top:431.00px;font-size:15px;color:#222;transform:scaleX(1.1082)">точки</span>
<span class="t" style="left:622.00px;top:409.00px;font-size:15px;color:#222;transform:scaleX(1.0397)">Цвет</span>
<span class="t" style="left:620.00px;top:431.00px;font-size:15px;color:#222;transform:scaleX(1.1014)">точки</span>
<span class="t" style="left:679.00px;top:409.00px;font-size:15px;color:#222;transform:scaleX(1.0500)">Тип</span>
<span class="t" style="left:670.00px;top:431.00px;font-size:15px;color:#222;transform:scaleX(1.0748)">линии</span>
<span class="t" style="left:728.00px;top:409.00px;font-size:15px;color:#222;transform:scaleX(1.0247)">Цвет</span>
<span class="t" style="left:731.00px;top:431.00px;font-size:15px;color:#222;transform:scaleX(0.9717)">ли...</span>
<span class="t" style="left:777.00px;top:409.00px;font-size:15px;color:#222;transform:scaleX(1.0431)">Ку</span>
<span class="t" style="left:776.00px;top:431.00px;font-size:15px;color:#222;transform:scaleX(0.9846)">р...</span>
<span class="t" style="left:805.00px;top:409.00px;font-size:15px;color:#222;transform:scaleX(1.0649)">По</span>
<span class="t" style="left:805.00px;top:431.00px;font-size:15px;color:#222;transform:scaleX(0.9912)">д...</span>
<span class="t" style="left:834.00px;top:409.00px;font-size:15px;color:#222;transform:scaleX(1.1491)">При</span>
<span class="t" style="left:839.00px;top:431.00px;font-size:15px;color:#222;transform:scaleX(0.9860)">м...</span>
<span class="t" style="left:9.00px;top:685.00px;font-size:12px;color:#ffffff;transform:scaleX(0.9526)">Расчет</span>
<span class="t" style="left:49.00px;top:685.00px;font-size:12px;color:#ffffff;transform:scaleX(0.9884)">успешно</span>
<span class="t" style="left:100.00px;top:685.00px;font-size:12px;color:#ffffff;transform:scaleX(1.0101)">выполнен.</span>
<span class="t" style="left:928.00px;top:31.00px;font-size:16px;color:#444;transform:scaleX(0.8113);font-weight:700">?</span>
</div>
</body>
</html>
